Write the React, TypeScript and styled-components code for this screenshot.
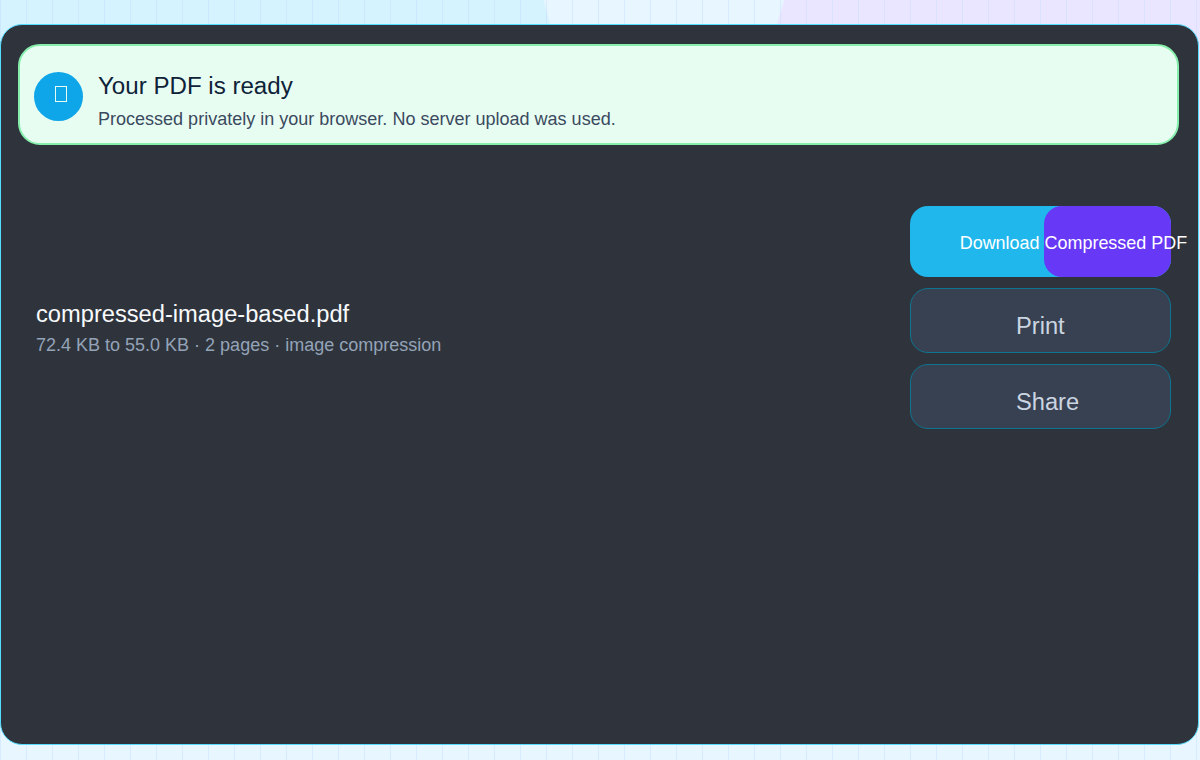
import React from "react";
import styled, { createGlobalStyle } from "styled-components";

const Global = createGlobalStyle`
  html, body { margin: 0; padding: 0; height: 100%; }
  body {
    font-family: "Liberation Sans", Arial, sans-serif;
    overflow: hidden;
  }
`;

const Page = styled.div`
  width: 1200px;
  height: 760px;
  box-sizing: border-box;
  padding: 24px 1px 15px 0;
  background-color: #e8f6ff;
  background-image:
    linear-gradient(90deg, rgba(191, 219, 254, 0.4) 1px, transparent 1px),
    radial-gradient(circle 565px at 0px 150px, #d5f2ff 0 99.6%, transparent 100%),
    radial-gradient(circle 438px at 1200px 135px, #ebe6ff 0 99.6%, transparent 100%);
  background-size: 26px 26px, 100% 100%, 100% 100%;
`;

const Card = styled.main`
  height: 100%;
  box-sizing: border-box;
  padding: 19px 19px 0 17px;
  background: #2f343c;
  border: 1px solid #55dcff;
  border-radius: 22px;
  display: flex;
  flex-direction: column;
`;

const Banner = styled.section`
  box-sizing: border-box;
  height: 101px;
  padding: 4px 15px 0 14px;
  background: #e8fdf2;
  border: 2px solid #86efac;
  border-radius: 22px;
  display: flex;
  align-items: center;
  gap: 15px;
`;

const Badge = styled.div`
  flex: none;
  box-sizing: border-box;
  width: 49px;
  height: 49px;
  padding: 0 0 5px 5px;
  border-radius: 50%;
  background: #0ea5e9;
  display: flex;
  align-items: center;
  justify-content: center;
`;

const BannerText = styled.div`
  padding-top: 9px;
  display: flex;
  flex-direction: column;
  gap: 8px;
`;

const BannerTitle = styled.h2`
  margin: 0;
  font-size: 24.12px;
  line-height: 28px;
  font-weight: 400;
  color: #0f2238;
`;

const BannerNote = styled.p`
  margin: 0;
  font-size: 18.03px;
  line-height: 22px;
  color: #3b4a5e;
`;

const FileRow = styled.section`
  margin-top: 61px;
  padding: 0 8px 0 18px;
  display: flex;
  justify-content: space-between;
  align-items: center;
`;

const FileInfo = styled.div`
  padding-top: 20px;
  display: flex;
  flex-direction: column;
  gap: 6px;
`;

const FileName = styled.div`
  font-size: 23.68px;
  line-height: 28px;
  color: #f8fafc;
`;

const FileMeta = styled.div`
  font-size: 18px;
  line-height: 22px;
  color: #94a3b8;
`;

const Actions = styled.div`
  width: 261px;
  display: flex;
  flex-direction: column;
  gap: 11px;
`;

const PrimaryButton = styled.button`
  position: relative;
  height: 71px;
  padding: 3px 0 0 49.7px;
  border: 0;
  border-radius: 18px;
  background: #20b8ec;
  color: #ffffff;
  font: 17.97px/22px "Liberation Sans", Arial, sans-serif;
  text-align: left;
  white-space: nowrap;
  overflow: visible;
  &::before {
    content: "";
    position: absolute;
    top: 0;
    right: 0;
    bottom: 0;
    width: 127px;
    border-radius: 18px;
    background: #6739f6;
  }
`;

const PrimaryLabel = styled.span`
  position: relative;
`;

const GhostButton = styled.button`
  height: 65px;
  box-sizing: border-box;
  padding: 10px 0 0 105px;
  border: 1px solid #0e7490;
  border-radius: 18px;
  background: #374151;
  color: #cbd5e1;
  font: 23.68px/28px "Liberation Sans", Arial, sans-serif;
  text-align: left;
`;

export default function App() {
  return (
    <Page>
      <Global />
      <Card>
        <Banner>
          <Badge>
            <svg width="12" height="16" viewBox="0 0 12 16" aria-hidden="true">
              <rect x="0.5" y="0.5" width="11" height="15" fill="none" stroke="#e8fdf2" strokeWidth="1" />
            </svg>
          </Badge>
          <BannerText>
            <BannerTitle>Your PDF is ready</BannerTitle>
            <BannerNote>Processed privately in your browser. No server upload was used.</BannerNote>
          </BannerText>
        </Banner>
        <FileRow>
          <FileInfo>
            <FileName>compressed-image-based.pdf</FileName>
            <FileMeta>72.4 KB to 55.0 KB · 2 pages · image compression</FileMeta>
          </FileInfo>
          <Actions>
            <PrimaryButton>
              <PrimaryLabel>Download Compressed PDF</PrimaryLabel>
            </PrimaryButton>
            <GhostButton>Print</GhostButton>
            <GhostButton>Share</GhostButton>
          </Actions>
        </FileRow>
      </Card>
    </Page>
  );
}
